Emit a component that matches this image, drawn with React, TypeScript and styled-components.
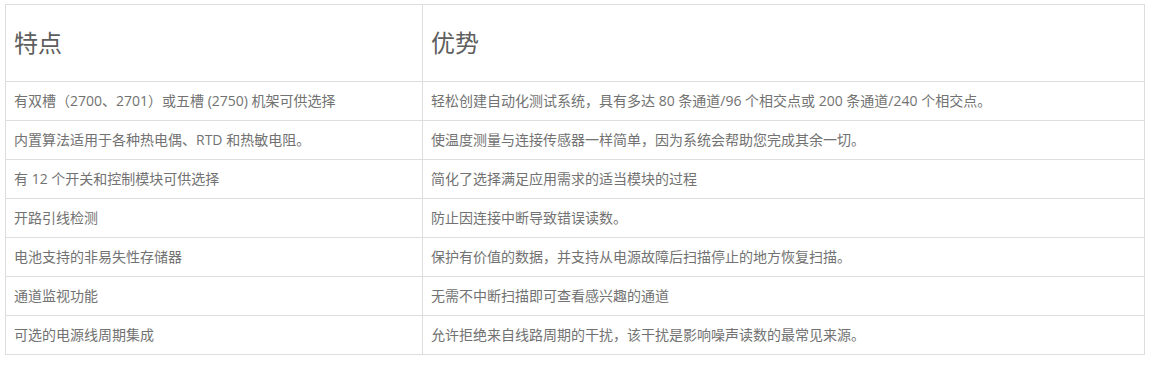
import React, { ReactElement } from 'react'
import styled, { createGlobalStyle } from 'styled-components'

const GlobalStyle = createGlobalStyle`
  body {
    margin: 0;
    background: #ffffff;
    font-family: 'Open Sans', 'Noto Sans CJK SC', sans-serif;
  }
`

const Page = styled.div`
  padding: 4px 0 0 5px;
`

const Table = styled.table`
  width: 1140px;
  border-collapse: collapse;
  table-layout: fixed;
  color: #727272;
`

const HeadCell = styled.th<{ $first?: boolean }>`
  height: 76px;
  padding: 0 8px;
  border: 1px solid #dddddd;
  text-align: left;
  font-weight: 400;
  font-size: 24px;
  line-height: 28px;
  color: #5e5e5e;
  vertical-align: middle;
  width: ${(p) => (p.$first ? '400px' : 'auto')};
`

const Cell = styled.td`
  height: 38px;
  padding: 0 8px;
  border: 1px solid #dddddd;
  font-size: 14px;
  line-height: 20px;
  vertical-align: middle;
`

const rows: [string, string][] = [
  [
    '有双槽（2700、2701）或五槽 (2750) 机架可供选择',
    '轻松创建自动化测试系统，具有多达 80 条通道/96 个相交点或 200 条通道/240 个相交点。',
  ],
  [
    '内置算法适用于各种热电偶、RTD 和热敏电阻。',
    '使温度测量与连接传感器一样简单，因为系统会帮助您完成其余一切。',
  ],
  ['有 12 个开关和控制模块可供选择', '简化了选择满足应用需求的适当模块的过程'],
  ['开路引线检测', '防止因连接中断导致错误读数。'],
  ['电池支持的非易失性存储器', '保护有价值的数据，并支持从电源故障后扫描停止的地方恢复扫描。'],
  ['通道监视功能', '无需不中断扫描即可查看感兴趣的通道'],
  ['可选的电源线周期集成', '允许拒绝来自线路周期的干扰，该干扰是影响噪声读数的最常见来源。'],
]

export default function App(): ReactElement {
  return (
    <Page>
      <GlobalStyle />
      <Table>
        <thead>
          <tr>
            <HeadCell $first>特点</HeadCell>
            <HeadCell>优势</HeadCell>
          </tr>
        </thead>
        <tbody>
          {rows.map(([feature, benefit]) => (
            <tr key={feature}>
              <Cell>{feature}</Cell>
              <Cell>{benefit}</Cell>
            </tr>
          ))}
        </tbody>
      </Table>
    </Page>
  )
}
